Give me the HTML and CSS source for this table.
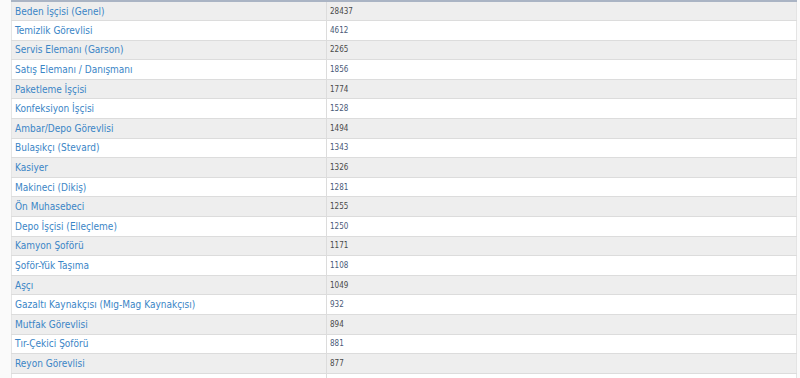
FILE: index.html
```html
<!DOCTYPE html>
<html lang="tr">
<head>
<meta charset="utf-8">
<link rel="stylesheet" href="styles.css">
</head>
<body>
<div class="wrap">
<table class="jobs">
<tbody>
<tr><td class="name"><a href="#">Beden İşçisi (Genel)</a></td><td class="num">28437</td></tr>
<tr><td class="name"><a href="#">Temizlik Görevlisi</a></td><td class="num">4612</td></tr>
<tr><td class="name"><a href="#">Servis Elemanı (Garson)</a></td><td class="num">2265</td></tr>
<tr><td class="name"><a href="#">Satış Elemanı / Danışmanı</a></td><td class="num">1856</td></tr>
<tr><td class="name"><a href="#">Paketleme İşçisi</a></td><td class="num">1774</td></tr>
<tr><td class="name"><a href="#">Konfeksiyon İşçisi</a></td><td class="num">1528</td></tr>
<tr><td class="name"><a href="#">Ambar/Depo Görevlisi</a></td><td class="num">1494</td></tr>
<tr><td class="name"><a href="#">Bulaşıkçı (Stevard)</a></td><td class="num">1343</td></tr>
<tr><td class="name"><a href="#">Kasiyer</a></td><td class="num">1326</td></tr>
<tr><td class="name"><a href="#">Makineci (Dikiş)</a></td><td class="num">1281</td></tr>
<tr><td class="name"><a href="#">Ön Muhasebeci</a></td><td class="num">1255</td></tr>
<tr><td class="name"><a href="#">Depo İşçisi (Elleçleme)</a></td><td class="num">1250</td></tr>
<tr><td class="name"><a href="#">Kamyon Şoförü</a></td><td class="num">1171</td></tr>
<tr><td class="name"><a href="#">Şoför-Yük Taşıma</a></td><td class="num">1108</td></tr>
<tr><td class="name"><a href="#">Aşçı</a></td><td class="num">1049</td></tr>
<tr><td class="name"><a href="#">Gazaltı Kaynakçısı (Mıg-Mag Kaynakçısı)</a></td><td class="num">932</td></tr>
<tr><td class="name"><a href="#">Mutfak Görevlisi</a></td><td class="num">894</td></tr>
<tr><td class="name"><a href="#">Tır-Çekici Şoförü</a></td><td class="num">881</td></tr>
<tr><td class="name"><a href="#">Reyon Görevlisi</a></td><td class="num">877</td></tr>
<tr class="spacer"><td class="name"></td><td class="num"></td></tr>
</tbody>
</table>
</div>
</body>
</html>
```
FILE: styles.css
```css
html, body {
  margin: 0;
  padding: 0;
  background: #ffffff;
}
.wrap {
  padding-left: 11px;
  padding-right: 3px;
  height: 378px;
  overflow: hidden;
  background: #fafafa;
}
.jobs {
  width: 100%;
  border-collapse: collapse;
  border-top: 2px solid #aab4c4;
  background: #fff;
  font-family: "DejaVu Sans Condensed", "DejaVu Sans", Verdana, sans-serif;
}
.jobs tr {
  height: 19.6px;
}
.jobs tr:nth-child(odd) td {
  background: #eeeeee;
}
.jobs td {
  padding: 0 0 0 3px;
  border: 1px solid #dcdcdc;
  border-left: none;
  border-right: none;
  vertical-align: middle;
  white-space: nowrap;
}
.jobs td.name {
  width: 311px;
  border-left: 1px solid #e4e4e4;
  border-right: 1px solid #dcdcdc;
  font-size: 10px;
}
.jobs td.name a {
  color: #3a85c6;
  text-decoration: none;
}
.jobs td.num {
  font-size: 8px;
  color: #4a4a4a;
  border-right: 1px solid #e4e4e4;
}
.jobs tr:nth-child(even) td.num {
  color: #4a5a78;
}
```
